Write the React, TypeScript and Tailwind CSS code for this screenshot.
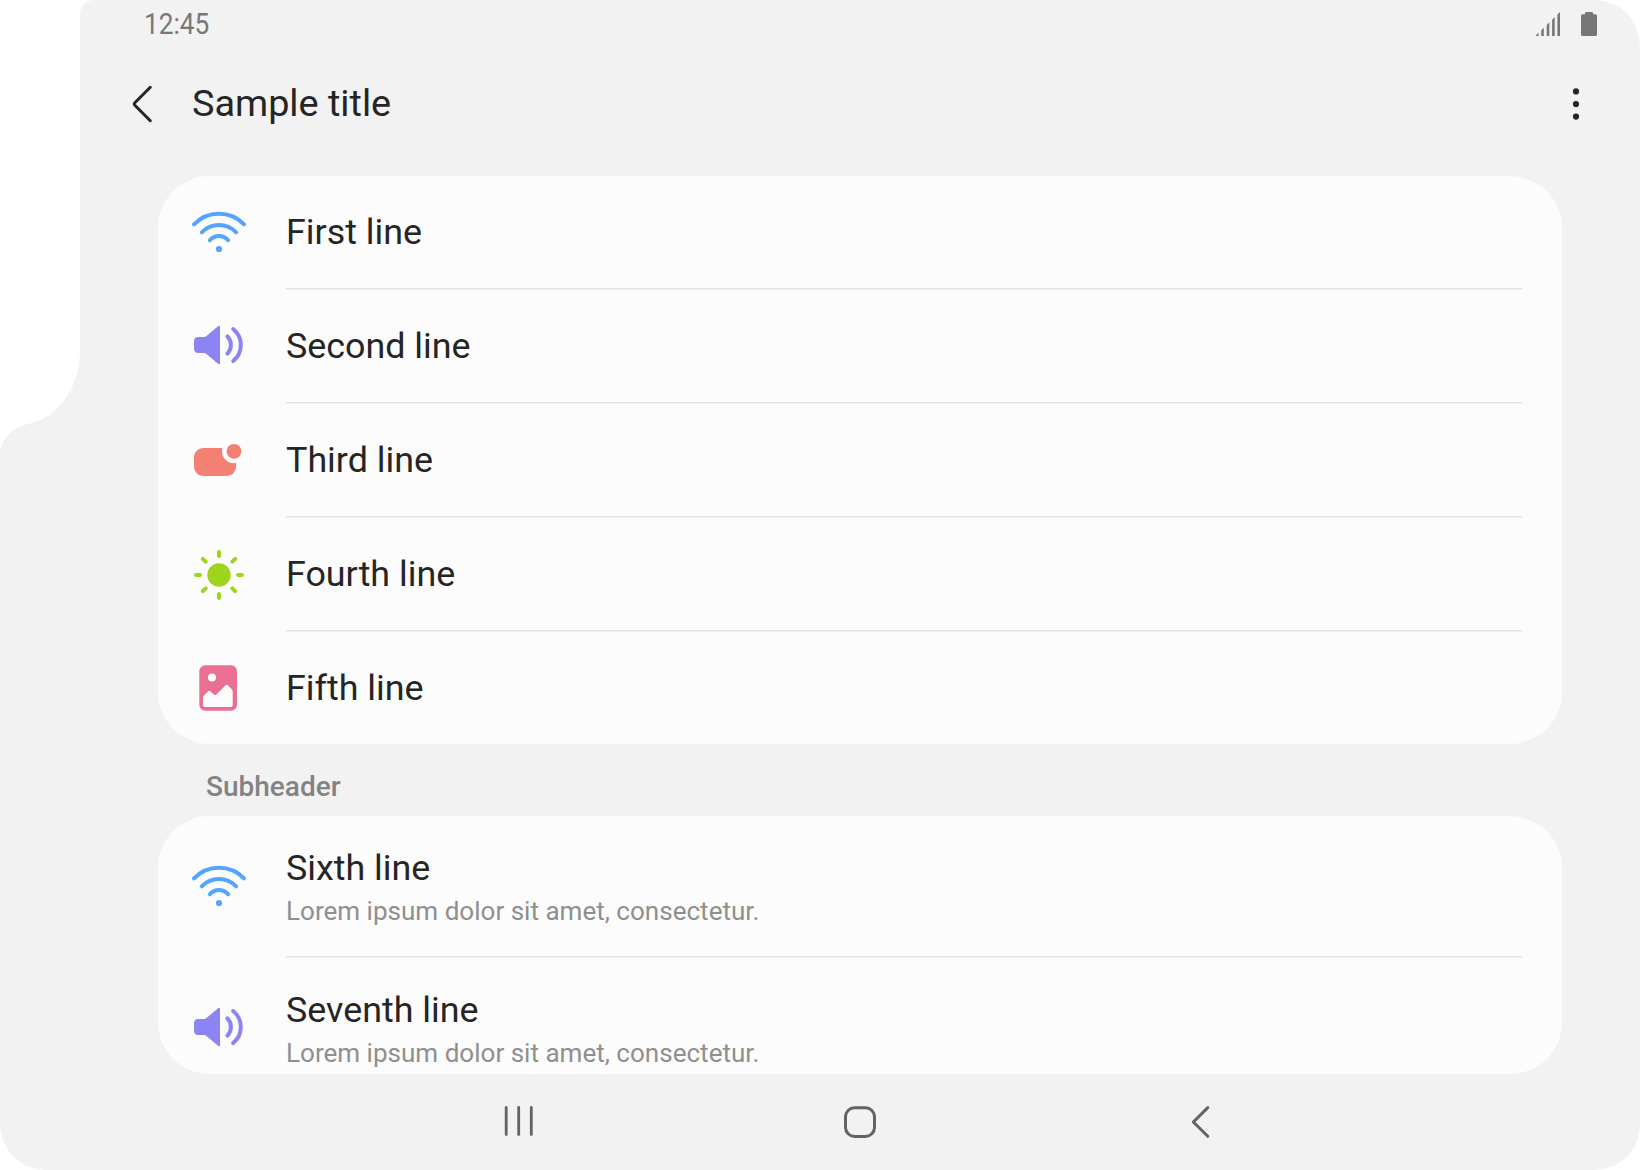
import type { ReactNode } from "react";

const WifiIcon = () => (
  <svg className="size-14" viewBox="0 0 56 56" fill="none" stroke="#52a4ff" strokeWidth="4" strokeLinecap="round">
    <path d="M3 20.3A34.8 34.8 0 0 1 53 20.3" />
    <path d="M10.8 28.3A24 24 0 0 1 45.1 28.3" />
    <path d="M18.8 36.3A12 12 0 0 1 37.1 36.3" />
    <circle cx="28" cy="45" r="3.1" fill="#52a4ff" stroke="none" />
  </svg>
);

const SoundIcon = () => (
  <svg className="size-14" viewBox="0 0 56 56" fill="none" stroke="#8d84f4" strokeWidth="4" strokeLinecap="round">
    <path
      stroke="none"
      fill="#8d84f4"
      d="M7.4 19H13.3Q14.3 19 15.1 18.3L27.4 8.1Q29 7 29 8.8V45.2Q29 47 27.4 45.9L15.1 35.7Q14.3 35 13.3 35H7.4Q3 35 3 30.6V23.4Q3 19 7.4 19Z"
    />
    <path d="M36.4 18.4A12.3 12.3 0 0 1 36.4 35.6" />
    <path d="M42.2 11A20.6 20.6 0 0 1 42.2 43" />
  </svg>
);

const BadgeIcon = () => (
  <svg className="size-14" viewBox="0 0 56 56" fill="#f38072">
    <rect x="3" y="16" width="42" height="28" rx="9" />
    <circle cx="43" cy="19.3" r="12" fill="#fcfcfc" />
    <circle cx="43" cy="19.3" r="7.4" />
  </svg>
);

const SunIcon = () => (
  <svg className="size-14" viewBox="0 0 56 56" fill="none" stroke="#9ed41e" strokeWidth="4" strokeLinecap="round">
    <circle cx="28" cy="29" r="11.7" fill="#9ed41e" stroke="none" />
    <path d="M28 6V10M28 48V52M5 29H9M47 29H51M11.8 12.8L14.7 15.7M44.2 12.8L41.3 15.7M11.8 45.2L14.7 42.3M44.2 45.2L41.3 42.3" />
  </svg>
);

const PictureIcon = () => (
  <svg className="size-14" viewBox="0 0 56 56" fill="#fcfcfc">
    <rect x="8.3" y="5.2" width="37.7" height="45.5" rx="6" fill="#e97092" />
    <circle cx="21" cy="17.4" r="4" />
    <path d="M12 37.6Q12 36.3 13 35.4L17.3 31.3Q18.4 30.3 19.5 31.4L23 34.6Q24.3 35.7 25.5 34.5L34.4 25.4Q35.7 24.2 37 25.4L40.8 29.2Q41.7 30.1 41.7 31.4V44.4Q41.7 47 39.1 47H14.6Q12 47 12 44.4Z" />
  </svg>
);

const SignalIcon = () => (
  <svg className="h-6 w-[25px]" viewBox="0 0 25 24" fill="#777777">
    <clipPath id="signal">
      <path d="M0.3 24L25 0V24Z" />
    </clipPath>
    <g clipPath="url(#signal)">
      <rect x="0.6" width="3" height="24" />
      <rect x="6.2" width="2.6" height="24" />
      <rect x="11.7" width="2.6" height="24" />
      <rect x="17.1" width="2.6" height="24" />
      <rect x="22.4" width="2.6" height="24" />
    </g>
  </svg>
);

const BatteryIcon = () => (
  <svg className="h-6 w-4" viewBox="0 0 16 24" fill="#777777">
    <path d="M5 0H11Q12 0 12 1V2.3H14.5Q16 2.3 16 3.8V22.5Q16 24 14.5 24H1.5Q0 24 0 22.5V3.8Q0 2.3 1.5 2.3H4V1Q4 0 5 0Z" />
  </svg>
);

function Row({ icon, title, detail, last }: { icon: ReactNode; title: string; detail?: string; last?: boolean }) {
  return (
    <div className="flex shrink-0 pl-[33px] pr-10">
      <div className={detail ? "flex h-[140px] w-[95px] shrink-0 items-center" : "flex h-28 w-[95px] shrink-0 items-center"}>
        {icon}
      </div>
      <div className={last ? "flex-1" : "mb-px flex-1 border-b border-[#e3e3e3] shadow-[0_1px_0_#f0f0f0]"}>
        {detail ? (
          <div className="h-[140px] pt-[30px]">
            <div className="text-[35.85px] leading-[44px] text-[#252525]">{title}</div>
            <div className="text-[26.05px] leading-[42px] text-[#8f8f8f]">{detail}</div>
          </div>
        ) : (
          <div className="flex h-28 items-center text-[35.85px] leading-[48px] text-[#252525]">{title}</div>
        )}
      </div>
    </div>
  );
}

export default function App() {
  return (
    <div className="h-[1170px] w-[1640px] overflow-hidden bg-white">
      <div className="flex h-full w-full flex-col bg-[#f2f2f2] font-[Roboto,sans-serif] [clip-path:path('M94,0H1592C1622,0,1640,20,1640,48V1122C1640,1150,1622,1170,1592,1170H48C20,1170,0,1150,0,1122V455C0,440,12,427,28,424C58,418,80,388,80,350V14C80,6,86,0,94,0Z')]">
        <div className="flex h-12 shrink-0 items-center pl-[144px] pr-[43px]">
          <div className="origin-left scale-x-[0.875] text-[30px] leading-none text-[#777777]">12:45</div>
          <div className="ml-auto flex gap-[21px]">
            <SignalIcon />
            <BatteryIcon />
          </div>
        </div>

        <header className="flex h-28 shrink-0 items-center pl-[130px] pr-[60px]">
          <svg className="h-10 w-6" viewBox="0 0 24 40" fill="none" stroke="#252525" strokeWidth="3" strokeLinecap="round" strokeLinejoin="round">
            <path d="M20.3 3.3L4.6 19Q3.8 20 4.6 21L20.3 36.7" />
          </svg>
          <h1 className="ml-[38px] pb-0.5 text-[37.8px] leading-[48px] text-[#252525]">Sample title</h1>
          <svg className="ml-auto h-8 w-2" viewBox="0 0 8 32" fill="#252525">
            <circle cx="4" cy="3.4" r="3.1" />
            <circle cx="4" cy="16" r="3.1" />
            <circle cx="4" cy="28.6" r="3.1" />
          </svg>
        </header>

        <main className="mt-4 ml-[158px] flex w-[1404px] shrink-0 flex-col">
          <section className="overflow-hidden rounded-[52px] bg-[#fcfcfc]">
            <Row icon={<WifiIcon />} title="First line" />
            <Row icon={<SoundIcon />} title="Second line" />
            <Row icon={<BadgeIcon />} title="Third line" />
            <Row icon={<SunIcon />} title="Fourth line" />
            <Row icon={<PictureIcon />} title="Fifth line" last />
          </section>
          <h2 className="h-[72px] pt-[26px] pl-12 text-[28px] leading-[33px] font-medium text-[#838383]">Subheader</h2>
          <section className="flex h-[258px] flex-col overflow-hidden rounded-[52px] bg-[#fcfcfc]">
            <Row icon={<WifiIcon />} title="Sixth line" detail="Lorem ipsum dolor sit amet, consectetur." />
            <Row icon={<SoundIcon />} title="Seventh line" detail="Lorem ipsum dolor sit amet, consectetur." last />
          </section>
        </main>

        <nav className="flex h-24 items-center justify-center gap-[305px] pl-20">
          <svg className="size-9" viewBox="0 0 36 36" fill="none" stroke="#636363" strokeWidth="2.8" strokeLinecap="round">
            <path d="M5.2 3.5V30.5M17.7 3.5V30.5M30.3 3.5V30.5" />
          </svg>
          <svg className="size-9" viewBox="0 0 36 36" fill="none" stroke="#636363" strokeWidth="3">
            <rect x="3.5" y="3.8" width="29" height="28.6" rx="9" />
          </svg>
          <svg className="size-9" viewBox="0 0 36 36" fill="none" stroke="#636363" strokeWidth="3" strokeLinecap="round" strokeLinejoin="round">
            <path d="M24.8 3.6L10.3 18L24.8 32.3" />
          </svg>
        </nav>
      </div>
    </div>
  );
}
